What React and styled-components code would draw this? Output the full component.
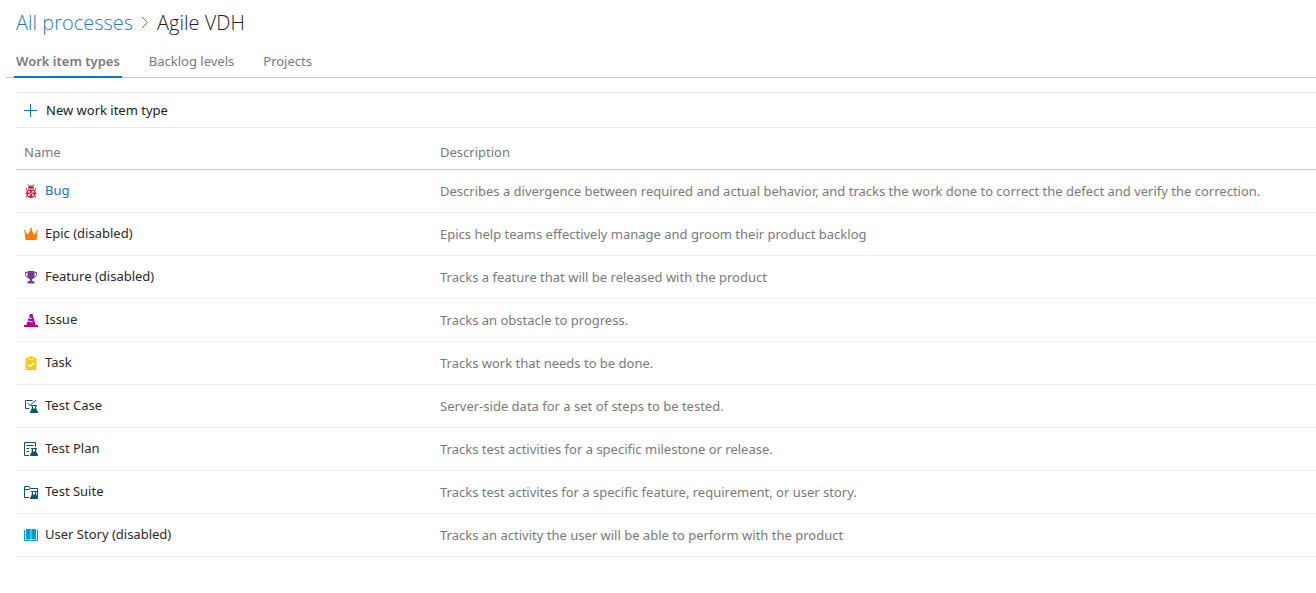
import React from "react";
import styled, { createGlobalStyle } from "styled-components";

const GlobalStyle = createGlobalStyle`
  * { box-sizing: border-box; }
  body {
    margin: 0;
    background: #fff;
    color: #222;
    font-family: "Segoe UI", "Noto Sans", "Open Sans", sans-serif;
    font-size: 13px;
    line-height: 20px;
  }
`;

const Page = styled.div`
  padding: 9px 0 36px;
`;

const Breadcrumb = styled.nav`
  display: flex;
  align-items: center;
  gap: 8px;
  padding-left: 16px;
  font-family: "Segoe UI", "Open Sans", sans-serif;
  font-size: 20px;
  line-height: 28px;
`;

const CrumbLink = styled.a`
  color: #2b7cba;
  font-weight: 300;
  text-decoration: none;
`;

const Title = styled.h1`
  margin: 0;
  color: #212121;
  font-size: 20px;
  font-weight: 300;
`;

const TabBar = styled.div`
  display: flex;
  gap: 25px;
  margin: 9px 0 14px 6px;
  padding-left: 8px;
  border-bottom: 1px solid #c8c8c8;
`;

const Tab = styled.button`
  height: 32px;
  margin: 0 0 -1px;
  padding: 0 2px;
  border: 0;
  border-bottom: 2px solid ${(p) => (p.$active ? "#0078d7" : "transparent")};
  background: none;
  color: #7a7a7a;
  font: inherit;
  font-weight: ${(p) => (p.$active ? 600 : 400)};
  cursor: pointer;
`;

const Content = styled.main`
  margin-left: 16px;
`;

const Toolbar = styled.div`
  display: flex;
  align-items: center;
  height: 36px;
  padding-left: 8px;
  border: solid #eaeaea;
  border-width: 1px 0;
`;

const ToolButton = styled.button`
  display: flex;
  align-items: center;
  gap: 8px;
  padding: 0;
  border: 0;
  background: none;
  color: #212121;
  font: inherit;
  cursor: pointer;
`;

const Table = styled.table`
  width: 100%;
  border-spacing: 0;
  table-layout: fixed;
`;

const HeadCell = styled.th`
  width: ${(p) => p.$width || "auto"};
  height: 42px;
  padding: 6px 8px 0;
  border-bottom: 1px solid #c8c8c8;
  color: #7a7a7a;
  font-weight: 400;
  text-align: left;
`;

const Cell = styled.td`
  height: 43px;
  padding: 0 8px;
  border-bottom: 1px solid #f2f2f2;
  color: #7a7a7a;
  white-space: nowrap;
`;

const TypeName = styled.div`
  display: flex;
  align-items: center;
  gap: 7px;
  color: #2a2a2a;
`;

const TypeLabel = styled.span`
  padding-bottom: 2px;
`;

const TypeLink = styled.a`
  color: #1f70b5;
  text-decoration: none;
`;

const Glyph = styled.svg`
  flex: none;
  display: block;
  fill: ${(p) => p.$fill || "none"};
  stroke: ${(p) => p.$stroke || "none"};
`;

const TEAL = "#0b5a5e";

function Flask() {
  return (
    <g stroke="none">
      <path d="M5.500 5H14v9H5z" fill="#fff" />
      <path
        d="M7 6h6v1h-.8v2.500l1.800 3.500v1H6v-1l1.800-3.500V7H7z"
        fill={TEAL}
      />
      <path d="M9 7h2v2.500H9z" fill="#fff" />
    </g>
  );
}

function TypeIcon({ kind }) {
  const box = { width: 14, height: 14, viewBox: "0 0 14 14", "aria-hidden": true };
  switch (kind) {
    case "bug":
      return (
        <Glyph {...box} $fill="#cc293d">
          <path d="M4 .300 5.500 2M10 .300 8.500 2" stroke="#cc293d" />
          <path d="M4 4.800C4 2.600 5.200 1.500 7 1.500s3 1.100 3 3.300z" />
          <path d="M2.500 4v1.800L4 7M11.500 4v1.800L10 7M1.500 9.500h11M2.500 13.500V12L4 11M11.500 13.500V12L10 11" fill="none" stroke="#cc293d" strokeWidth=".9" />
          <path d="M3.800 5.500h6.400c1 .9 1.600 2.200 1.600 3.500 0 2.800-2 5-4.800 5s-4.800-2.200-4.800-5c0-1.300.600-2.600 1.600-3.500z" />
          <g fill="#fff">
            <circle cx="5" cy="7.700" r="1" />
            <circle cx="9" cy="7.700" r="1" />
            <circle cx="5" cy="11" r="1" />
            <circle cx="9" cy="11" r="1" />
            <circle cx="7" cy="9.400" r=".7" />
          </g>
        </Glyph>
      );
    case "epic":
      return (
        <Glyph {...box} $fill="#ff7b00">
          <path d="M1.500 13 .5 4.500 4 7.500 7 1.500l3 6 3.500-3-1 8.500z" />
          <circle cx=".9" cy="3.800" r=".9" />
          <circle cx="7" cy="1.700" r="1" />
          <circle cx="13.100" cy="3.800" r=".9" />
        </Glyph>
      );
    case "feature":
      return (
        <Glyph {...box} $fill="#773b93">
          <path d="M3.500 1h7v5.500c0 1.500-1.200 2.500-2.500 2.800V11h1.500l1 1v1.500h-7V12l1-1H6V9.300C4.700 9 3.500 8 3.500 6.500z" />
          <path d="M3.500 2.500h-2v2c0 1.500 1 2.500 2.500 2.500M10.500 2.500h2v2c0 1.500-1 2.500-2.500 2.500" fill="none" stroke="#773b93" />
        </Glyph>
      );
    case "issue":
      return (
        <Glyph {...box} $fill="#b4009e">
          <path d="M6 1h2.500l3 11H14v2H0v-2h2.300z" />
          <path d="M4.500 4.500l3 1M3.500 8l5 1" stroke="#fff" strokeWidth="1.200" />
        </Glyph>
      );
    case "task":
      return (
        <Glyph {...box} $fill="#f2cb1d">
          <path d="M1.500 2h3C4.800.8 5.800 0 7 0s2.200.8 2.500 2h3v12h-11z" />
          <path d="M4.500 3.500h5" stroke="#fff" />
          <path d="m4 8.500 2.200 2.200L10.300 6.500" fill="none" stroke="#fff" strokeWidth="1.300" />
        </Glyph>
      );
    case "case":
      return (
        <Glyph {...box} $stroke={TEAL}>
          <path d="M8.500 1.500h-7v8H5.500" />
          <Flask />
          <path d="M3.500 4 6 6.300 12 1" />
        </Glyph>
      );
    case "plan":
      return (
        <Glyph {...box} $stroke={TEAL}>
          <path d="M11.500 5V.500H.500v13H6M2.500 3.500h7M2.500 6.500h3M2.500 9.500h3" />
          <Flask />
        </Glyph>
      );
    case "suite":
      return (
        <Glyph {...box} $stroke={TEAL}>
          <path d="M6 12.500H.500v-11H5l1.500 2h7v9M1 4.500h4l1.500-1" />
          <Flask />
          <path d="M13.500 3.500v9" />
        </Glyph>
      );
    default:
      return (
        <Glyph {...box} $fill="#009ccc">
          <path d="M2 1h4.700v10.500H2zM7.300 1H12v10.500H7.300z" />
          <path d="M.500 2v10.500H6l1 .7 1-.7h5.500V2" fill="none" stroke="#009ccc" />
        </Glyph>
      );
  }
}

const TYPES = [
  { kind: "bug", name: "Bug", link: true, text: "Describes a divergence between required and actual behavior, and tracks the work done to correct the defect and verify the correction." },
  { kind: "epic", name: "Epic (disabled)", text: "Epics help teams effectively manage and groom their product backlog" },
  { kind: "feature", name: "Feature (disabled)", text: "Tracks a feature that will be released with the product" },
  { kind: "issue", name: "Issue", text: "Tracks an obstacle to progress." },
  { kind: "task", name: "Task", text: "Tracks work that needs to be done." },
  { kind: "case", name: "Test Case", text: "Server-side data for a set of steps to be tested." },
  { kind: "plan", name: "Test Plan", text: "Tracks test activities for a specific milestone or release." },
  { kind: "suite", name: "Test Suite", text: "Tracks test activites for a specific feature, requirement, or user story." },
  { kind: "story", name: "User Story (disabled)", text: "Tracks an activity the user will be able to perform with the product" },
];

const TABS = ["Work item types", "Backlog levels", "Projects"];

export default function App() {
  return (
    <Page>
      <GlobalStyle />
      <Breadcrumb aria-label="Breadcrumb">
        <CrumbLink href="#processes">All processes</CrumbLink>
        <Glyph width="8" height="14" viewBox="0 0 8 14" $stroke="#767676" aria-hidden="true">
          <path d="m1 1 5.500 5.500L1 12" />
        </Glyph>
        <Title>Agile VDH</Title>
      </Breadcrumb>
      <TabBar role="tablist">
        {TABS.map((label, i) => (
          <Tab key={label} role="tab" aria-selected={i === 0} $active={i === 0}>
            {label}
          </Tab>
        ))}
      </TabBar>
      <Content>
        <Toolbar>
          <ToolButton>
            <Glyph width="14" height="14" viewBox="0 0 14 14" $stroke="#106ebe" aria-hidden="true">
              <path d="M0 7.500h13M6.500 1v13" />
            </Glyph>
            New work item type
          </ToolButton>
        </Toolbar>
        <Table>
          <thead>
            <tr>
              <HeadCell scope="col" $width="416px">Name</HeadCell>
              <HeadCell scope="col">Description</HeadCell>
            </tr>
          </thead>
          <tbody>
            {TYPES.map((t) => (
              <tr key={t.kind}>
                <Cell>
                  <TypeName>
                    <TypeIcon kind={t.kind} />
                    <TypeLabel>
                      {t.link ? <TypeLink href="#bug">{t.name}</TypeLink> : t.name}
                    </TypeLabel>
                  </TypeName>
                </Cell>
                <Cell>{t.text}</Cell>
              </tr>
            ))}
          </tbody>
        </Table>
      </Content>
    </Page>
  );
}
